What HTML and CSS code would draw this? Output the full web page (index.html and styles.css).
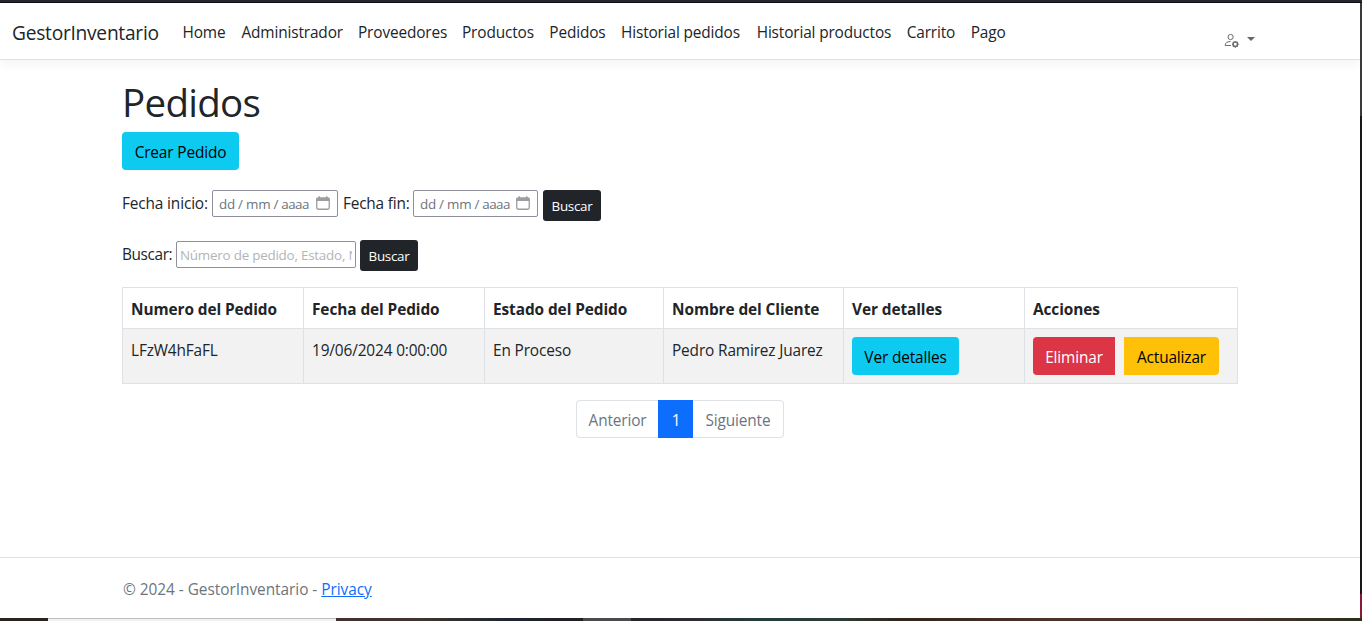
FILE: index.html
```html
<!DOCTYPE html>
<html lang="es">
<head>
<meta charset="utf-8">
<title>Pedidos - GestorInventario</title>
<link rel="stylesheet" href="styles.css">
</head>
<body>
<div class="strip-top"></div>
<div class="page">
  <header class="navbar">
    <a class="brand">GestorInventario</a>
    <nav class="nav">
      <a>Home</a><a>Administrador</a><a>Proveedores</a><a>Productos</a><a>Pedidos</a><a>Historial pedidos</a><a>Historial productos</a><a>Carrito</a><a>Pago</a>
    </nav>
    <div class="user">
      <svg width="16" height="16" viewBox="0 0 16 16" fill="none" stroke="#6c6c6c"><circle cx="6.600" cy="4" r="2.600"/><path d="M7 12.500H1.200c0-2.600 1.900-4 5.400-4"/><circle cx="11.300" cy="11.300" r="2.200" stroke-width="1.500"/><path d="M11.300 7.900v1M11.300 13.700v1M7.900 11.300h1M13.700 11.300h1M8.900 8.900l.7.7M13 13l.7.7M13.700 8.900l-.7.7M9.600 13l-.7.7" stroke-width="1.200"/></svg>
      <span class="caret"></span>
    </div>
  </header>
  <main class="container">
    <h1>Pedidos</h1>
    <a class="btn info create">Crear Pedido</a>
    <form class="dates">
      <label class="l1">Fecha inicio:</label>
      <div class="date d1"><span>dd</span><span>/</span><span>mm</span><span>/</span><span class="yy">aaaa</span><svg width="14" height="14" viewBox="0 0 14 14"><rect x=".75" y="2" width="12.500" height="11.250" rx="1.500" fill="none" stroke="#9c9ca1" stroke-width="1.300"/><path d="M.5 2h13v3H.5zM2.500.3h1.500v2H2.500zM10 .3h1.500v2H10z" fill="#9c9ca1"/></svg></div>
      <label class="l2">Fecha fin:</label>
      <div class="date d2"><span>dd</span><span>/</span><span>mm</span><span>/</span><span class="yy">aaaa</span><svg width="14" height="14" viewBox="0 0 14 14"><rect x=".75" y="2" width="12.500" height="11.250" rx="1.500" fill="none" stroke="#9c9ca1" stroke-width="1.300"/><path d="M.5 2h13v3H.5zM2.500.3h1.500v2H2.500zM10 .3h1.500v2H10z" fill="#9c9ca1"/></svg></div>
      <button type="button" class="dark">Buscar</button>
    </form>
    <form class="search">
      <label class="l3">Buscar:</label>
      <div class="field"><span>Número de pedido, Estado, N</span></div>
      <button type="button" class="dark">Buscar</button>
    </form>
    <table>
      <colgroup><col class="c1"><col class="c2"><col class="c3"><col class="c4"><col class="c5"><col class="c6"></colgroup>
      <thead><tr><th>Numero del Pedido</th><th>Fecha del Pedido</th><th>Estado del Pedido</th><th>Nombre del Cliente</th><th>Ver detalles</th><th>Acciones</th></tr></thead>
      <tbody><tr><td>LFzW4hFaFL</td><td>19/06/2024 0:00:00</td><td>En Proceso</td><td>Pedro Ramirez Juarez</td>
        <td><a class="btn info details">Ver detalles</a></td>
        <td><div class="group"><a class="btn danger">Eliminar</a><a class="btn warning">Actualizar</a></div></td></tr></tbody>
    </table>
    <div class="pagination"><a class="prev">Anterior</a><a class="current">1</a><a class="next">Siguiente</a></div>
  </main>
  <footer><div class="container foot">© 2024 - GestorInventario - <a>Privacy</a></div></footer>
</div>
<div class="edge"></div>
<div class="strip-bottom"></div>
</body>
</html>
```
FILE: styles.css
```css
* { box-sizing: border-box; }
body {
  margin: 0; width: 1362px; height: 621px; overflow: hidden;
  display: grid; grid-template: 3px 615px 3px / 1360px 2px;
  font: 15.4px/24px "Open Sans", "Noto Sans", sans-serif;
  letter-spacing: -0.14px; color: #212529; background: #fff;
}
.strip-top { grid-column: 1 / 3; background: #29272e; border-bottom: 1px solid #0d0c10; }
.strip-bottom {
  grid-column: 1 / 3;
  background:
    linear-gradient(#bdbdbd 1px, #f1f1f1 1px) 48px 0 / 288px 3px no-repeat,
    linear-gradient(#4d4a4f, #4d4a4f) 583px 0 / 48px 3px no-repeat,
    linear-gradient(90deg, #2b231e 0, #2b231e 48px, #43312e 336px, #40342f 420px, #1c2630 510px, #211f22 580px, #2d2931 681px, #243c3e 760px, #2c3d34 840px, #32231c 900px, #4b342a 1050px, #4b3430 1230px, #2b2d1e 1362px);
}
.edge { background: linear-gradient(#3b3a3b 0 113px, #15181b 113px 591px, #861a36 591px); }
.page { display: flex; flex-direction: column; background: #fff; }
.navbar {
  height: 57px; flex: none; display: flex; align-items: flex-start; padding: 18px 0 0 12px;
  border-bottom: 1px solid #dee2e6; box-shadow: 0 4px 12px rgba(0,0,0,.05);
}
.brand { width: 170.500px; font-size: 19.200px; letter-spacing: -.27px; white-space: nowrap; }
.nav { display: grid; grid-template-columns: 59px 116.500px 104px 87.300px 71.700px 135.700px 150px 64px 50px; width: 1041px; white-space: nowrap; }
.user { display: flex; align-items: flex-start; gap: 7px; padding-top: 12px; color: #6c6c6c; }
.caret { margin-top: 4px; border: 4.500px solid transparent; border-top-color: #666; border-bottom: 0; }
.container { width: 1116px; margin: 0 auto; }
main.container { flex: 1; padding-top: 18px; }
h1 { margin: 0 0 6px; font-size: 38.500px; font-weight: 400; line-height: 48px; letter-spacing: -.7px; }
.btn { display: block; height: 38px; padding-top: 9px; border-radius: 4px; text-align: center; color: #000; }
.info { background: #0dcaf0; }
.create { width: 117px; }
form { display: flex; align-items: flex-start; }
.dates { margin-top: 20px; height: 50px; }
.search { height: 47px; }
label { padding-top: 2px; white-space: nowrap; }
.l1 { width: 90px; }
.l2 { width: 74px; letter-spacing: -.2px; }
.l3 { width: 54px; padding-top: 3px; letter-spacing: -.4px; }
.date {
  display: flex; align-items: center; gap: 3px; height: 27px; border: 1px solid #8f8f9d; border-radius: 2px;
  padding: 1px 7px 0 6px; font-size: 13.400px; color: #6c757d; white-space: nowrap;
}
.date svg { margin: -3px 0 0 auto; }
.yy { letter-spacing: -.5px; }
.d1 { width: 126px; margin-right: 5px; }
.d2 { width: 125px; margin-right: 5px; margin-left: -4px; }
.dark {
  width: 58px; height: 31px; border: 0; border-radius: 3px; background: #212529; color: #fff;
  padding: 1px 0 0; font: 13.400px/20px "Open Sans", "Noto Sans", sans-serif; letter-spacing: -.3px;
}
.field { width: 180px; height: 27px; margin: 1px 4px 0 0; padding: 1px 3px 0; border: 1px solid #8f8f9d; border-radius: 2px; font-size: 13.400px; letter-spacing: -.22px; color: #b1b5b9; white-space: nowrap; }
.field span { display: block; overflow: hidden; }
table { width: 1116px; table-layout: fixed; border-collapse: collapse; }
th, td { border: 1px solid #dee2e6; padding: 10px 8px 6px; text-align: left; vertical-align: top; white-space: nowrap; }
th { font-weight: 700; letter-spacing: -.08px; height: 41px; }
td { background: #f2f2f2; height: 55px; }
td .btn { margin-top: -2px; }
.c1, .c2 { width: 181px; }
.c3 { width: 179px; }
.c4 { width: 180px; }
.c5 { width: 181px; }
.details { width: 107px; }
.group { display: flex; gap: 9px; }
.danger { width: 82px; background: #dc3545; color: #fff; border-radius: 4px 0 0 4px; }
.warning { width: 95px; background: #ffc107; border-radius: 0 4px 4px 0; }
.pagination { display: flex; width: 208px; height: 38px; margin: 16px auto 0; color: #6c757d; text-align: center; }
.pagination a { padding-top: 8px; border: 1px solid #dee2e6; }
.prev { width: 82px; border-radius: 4px 0 0 4px; }
.pagination .current { width: 35px; background: #0d6efd; border-color: #0d6efd; color: #fff; }
.next { width: 91px; border-radius: 0 4px 4px 0; }
.pagination .prev, .pagination .current { border-right: 0; }
.pagination .next { border-left: 0; }
footer { height: 61px; border-top: 1px solid #dee2e6; color: #6c757d; }
.foot { padding: 20px 0 0 1px; letter-spacing: -.03px; }
.foot a { color: #0d6efd; text-decoration: underline; }
```
